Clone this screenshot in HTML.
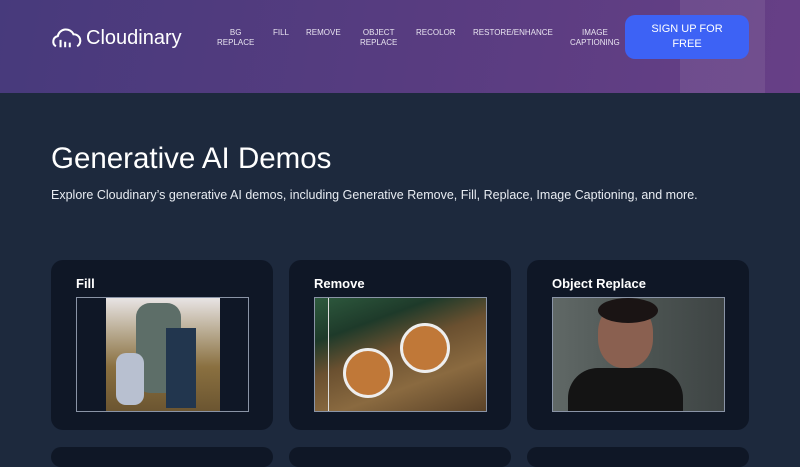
<!DOCTYPE html><html><head><style>
*{margin:0;padding:0;box-sizing:border-box}
body{width:800px;height:450px;overflow:hidden;background:#1d293d;font-family:"Liberation Sans",sans-serif;color:#fff;position:relative}
.hd{position:absolute;left:0;top:0;width:800px;height:93px;background:linear-gradient(100deg,#473a7c 0%,#573c80 50%,#673f86 100%)}
.tri{position:absolute;left:680px;top:0;width:85px;height:93px;background:rgba(255,255,255,0.08)}
.logo{position:absolute;left:50px;top:26px;font-size:20px;display:flex;align-items:center;gap:2px}
.nav{position:absolute;top:28px;font-size:8px;text-align:center;line-height:10px;color:#e8e4f0}
.btn{position:absolute;left:625px;top:15px;width:124px;height:44px;background:#3d62f5;border-radius:10px;font-size:11px;text-align:center;line-height:15px;padding-top:7px}
h1{position:absolute;left:51px;top:142px;font-weight:400;font-size:29.5px}
.p{position:absolute;left:51px;top:188px;font-size:12.5px;color:#e8ecf2}
.card{position:absolute;top:260px;width:222px;height:170px;background:#0f1726;border-radius:12px}
.card b{position:absolute;left:25px;top:16px;font-size:13px}
.img{position:absolute;left:25px;top:37px;width:173px;height:115px;border:1px solid #8a94a6;overflow:hidden}
.c2{position:absolute;top:447px;width:222px;height:20px;background:#0f1726;border-radius:12px}
</style></head><body>
<div class="hd"><div class="tri"></div>
<div class="logo"><svg width="34" height="24" viewBox="0 0 36 26" fill="none" stroke="#fff" stroke-width="2.2"><path d="M6 22a6 6 0 0 1 2-11a9 9 0 0 1 17-2a7 7 0 0 1 4 13"/><path d="M11 23v-8M16 23v-6M21 23v-5" /></svg><span>Cloudinary</span></div>
<div class="nav" style="left:217px">BG<br>REPLACE</div>
<div class="nav" style="left:273px">FILL</div>
<div class="nav" style="left:306px">REMOVE</div>
<div class="nav" style="left:360px">OBJECT<br>REPLACE</div>
<div class="nav" style="left:416px">RECOLOR</div>
<div class="nav" style="left:473px">RESTORE/ENHANCE</div>
<div class="nav" style="left:570px">IMAGE<br>CAPTIONING</div>
<div class="btn">SIGN UP FOR<br>FREE</div>
</div>
<h1>Generative AI Demos</h1>
<div class="p">Explore Cloudinary’s generative AI demos, including Generative Remove, Fill, Replace, Image Captioning, and more.</div>
<div class="card" style="left:51px"><b>Fill</b><div class="img" style="background:#0f1726"><div style="position:absolute;left:29px;top:0;width:114px;height:115px;background:linear-gradient(180deg,#e8e4e4 0%,#b8aa90 30%,#8a7040 60%,#6a5430 100%)"><div style="position:absolute;left:30px;top:5px;width:45px;height:90px;background:#5d6e68;border-radius:14px"></div><div style="position:absolute;left:60px;top:30px;width:30px;height:80px;background:#22364e"></div><div style="position:absolute;left:10px;top:55px;width:28px;height:52px;background:#b8c0d0;border-radius:10px"></div></div></div></div>
<div class="card" style="left:289px"><b>Remove</b><div class="img" style="background:linear-gradient(160deg,#2e5a3e 0%,#1e3a2a 25%,#6a5030 45%,#8a6a40 70%,#5a4228 100%)"><div style="position:absolute;left:28px;top:50px;width:50px;height:50px;border-radius:50%;background:#c07838;border:3px solid #eee"></div><div style="position:absolute;left:85px;top:25px;width:50px;height:50px;border-radius:50%;background:#c07838;border:3px solid #eee"></div><div style="position:absolute;left:13px;top:0;width:1px;height:115px;background:#ddd"></div></div></div>
<div class="card" style="left:527px"><b>Object Replace</b><div class="img" style="background:linear-gradient(90deg,#606866,#4a5250 60%,#3e4444)"><div style="position:absolute;left:45px;top:5px;width:55px;height:65px;border-radius:45%;background:#8a6050"></div><div style="position:absolute;left:45px;top:0;width:60px;height:25px;border-radius:50%;background:#1a1414"></div><div style="position:absolute;left:15px;top:70px;width:115px;height:50px;border-radius:30px 30px 0 0;background:#141414"></div></div></div>
<div class="c2" style="left:51px"></div><div class="c2" style="left:289px"></div><div class="c2" style="left:527px"></div>
</body></html>
